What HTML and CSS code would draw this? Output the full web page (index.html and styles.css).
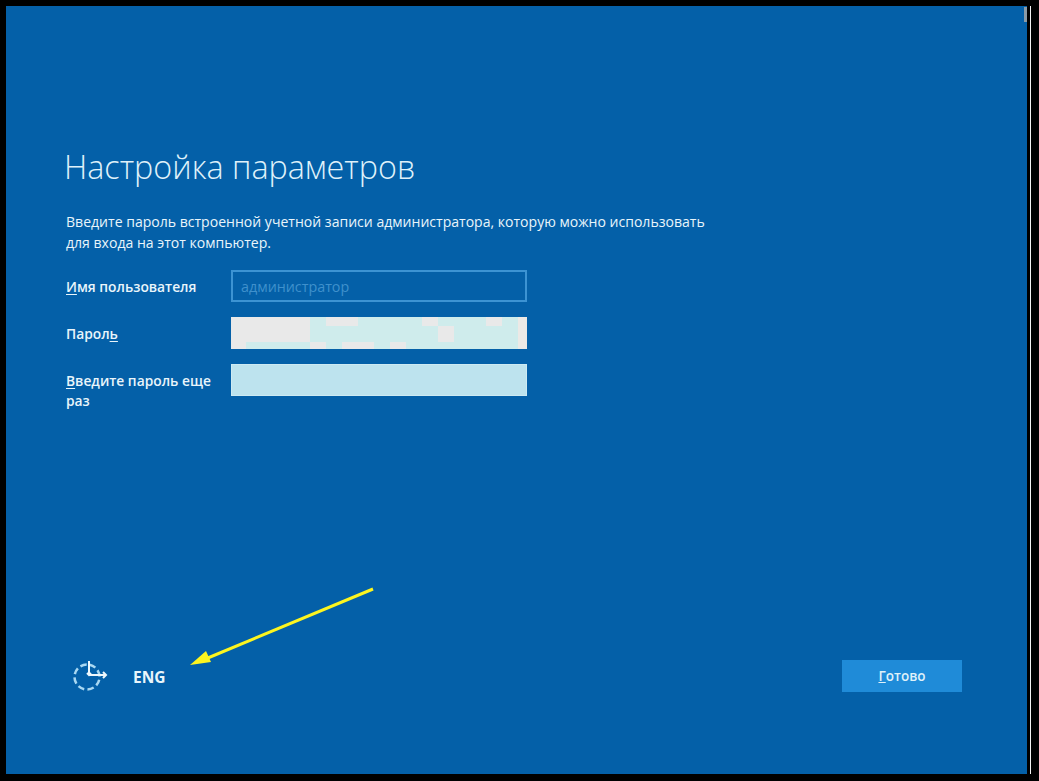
FILE: index.html
```html
<!DOCTYPE html>
<html lang="ru">
<head>
    <meta charset="UTF-8">
    <title>Настройка параметров</title>
    <link rel="stylesheet" href="styles.css">
</head>
<body>
    <div class="screen">
        <h1>Настройка параметров</h1>
        <p class="intro">Введите пароль встроенной учетной записи администратора, которую можно использовать<br>для входа на этот компьютер.</p>

        <form class="fields">
            <label for="user"><u>И</u>мя пользователя</label>
            <input type="text" id="user" class="user-input" placeholder="администратор">
            <label for="pass">Парол<u>ь</u></label>
            <div class="field pass-field" id="pass"></div>
            <label for="pass2"><u>В</u>ведите пароль еще раз</label>
            <div class="field pass2-field" id="pass2"></div>
        </form>

        <div class="footer">
            <svg class="access-icon" width="36" height="34" viewBox="0 0 36 34" fill="none" stroke-width="2">
                <circle cx="14" cy="18" r="12.500" stroke="#a9d8f2" stroke-width="2.500" stroke-dasharray="6.500 3.300" transform="rotate(-78 14 18)"/>
                <path stroke="#eef8fd" d="M16 2v14M16 16h17M30 13l3 3-3 3M14 14l2 2 2-2"/>
            </svg>
            <span class="lang">ENG</span>
            <button type="button" class="done"><u>Г</u>отово</button>
        </div>

        <div class="edge"></div>
    </div>

    <svg class="arrow" width="200" height="90" viewBox="0 0 200 90">
        <path d="M184 3L14 74" stroke="#fdf51f" stroke-width="3" fill="none"/>
        <path d="M1 79L17 65L22 76Z" fill="#fdf51f"/>
    </svg>
</body>
</html>
```

FILE: styles.css
```css
* {
    margin: 0;
    padding: 0;
    box-sizing: border-box;
}

html, body {
    height: 100%;
}

body {
    background: #000;
    font-family: 'Open Sans', 'Noto Sans', sans-serif;
    position: relative;
    overflow: hidden;
}

.screen {
    position: absolute;
    left: 6px;
    top: 6px;
    width: 1021px;
    height: 768px;
    background: #0460a8;
    color: #e9f5fb;
    display: flex;
    flex-direction: column;
    padding: 140px 65px 82px 58px;
}

/* thin white line right of the blue area */
body::after {
    content: "";
    position: absolute;
    left: 1030px;
    top: 6px;
    width: 1px;
    height: 768px;
    background: #f4f4f4;
}

.edge {
    position: absolute;
    right: 0;
    top: 1px;
    width: 3px;
    height: 15px;
    background: #8a9aa6;
}

h1 {
    font-size: 32.300px;
    font-weight: 300;
    line-height: 40px;
    color: #dff1fa;
}

.intro {
    margin-top: 25px;
    margin-left: 2px;
    font-size: 14.050px;
    line-height: 21px;
}

.fields {
    margin-top: 17px;
    margin-left: 2px;
    display: grid;
    grid-template-columns: 165px 296px;
    grid-auto-rows: 32px;
    row-gap: 15px;
}

.fields label {
    font-size: 13.800px;
    font-weight: 600;
    line-height: 20px;
    padding-top: 7px;
}

.fields label u {
    text-underline-offset: 2px;
}

.user-input {
    border: 2px solid #3c93d3;
    background: transparent;
    padding: 0 8px;
    font: 14.300px 'Open Sans', 'Noto Sans', sans-serif;
    outline: none;
    color: #3f90cc;
}

.user-input::placeholder {
    color: #3f90cc;
    opacity: 1;
}

.pass-field {
    background-color: #cfecec;
    background-image:
        linear-gradient(#e9e9e9, #e9e9e9),
        linear-gradient(#e9e9e9, #e9e9e9),
        linear-gradient(#e9e9e9, #e9e9e9),
        linear-gradient(#e9e9e9, #e9e9e9),
        linear-gradient(#e9e9e9, #e9e9e9),
        linear-gradient(#ece9e6, #ece9e6),
        linear-gradient(#e9e9e9, #e9e9e9),
        linear-gradient(#e9e9e9, #e9e9e9),
        linear-gradient(#e9e9e9, #e9e9e9),
        linear-gradient(#e9e9e9, #e9e9e9);
    background-repeat: no-repeat;
    background-size: 79px 25px, 32px 9px, 16px 9px, 16px 16px, 16px 9px, 9px 32px, 15px 7px, 16px 7px, 32px 7px, 16px 7px;
    background-position: 0 0, 95px 0, 191px 0, 207px 9px, 255px 0, 287px 0, 0 25px, 79px 25px, 111px 25px, 159px 25px;
}

.pass2-field {
    background: #bde3ee;
    border: 1px solid #cdeaf3;
}

.footer {
    margin-top: auto;
    display: flex;
    align-items: center;
    height: 32px;
}

.access-icon {
    margin-left: 9px;
}

.lang {
    margin-left: 24px;
    margin-top: 2px;
    font-size: 15.500px;
    font-weight: 700;
}

.done {
    margin-left: auto;
    width: 120px;
    height: 32px;
    background: #1f8bd8;
    border: none;
    color: #dff1fa;
    font: 600 13.500px 'Open Sans', 'Noto Sans', sans-serif;
}

.arrow {
    position: absolute;
    left: 189px;
    top: 586px;
}
```
